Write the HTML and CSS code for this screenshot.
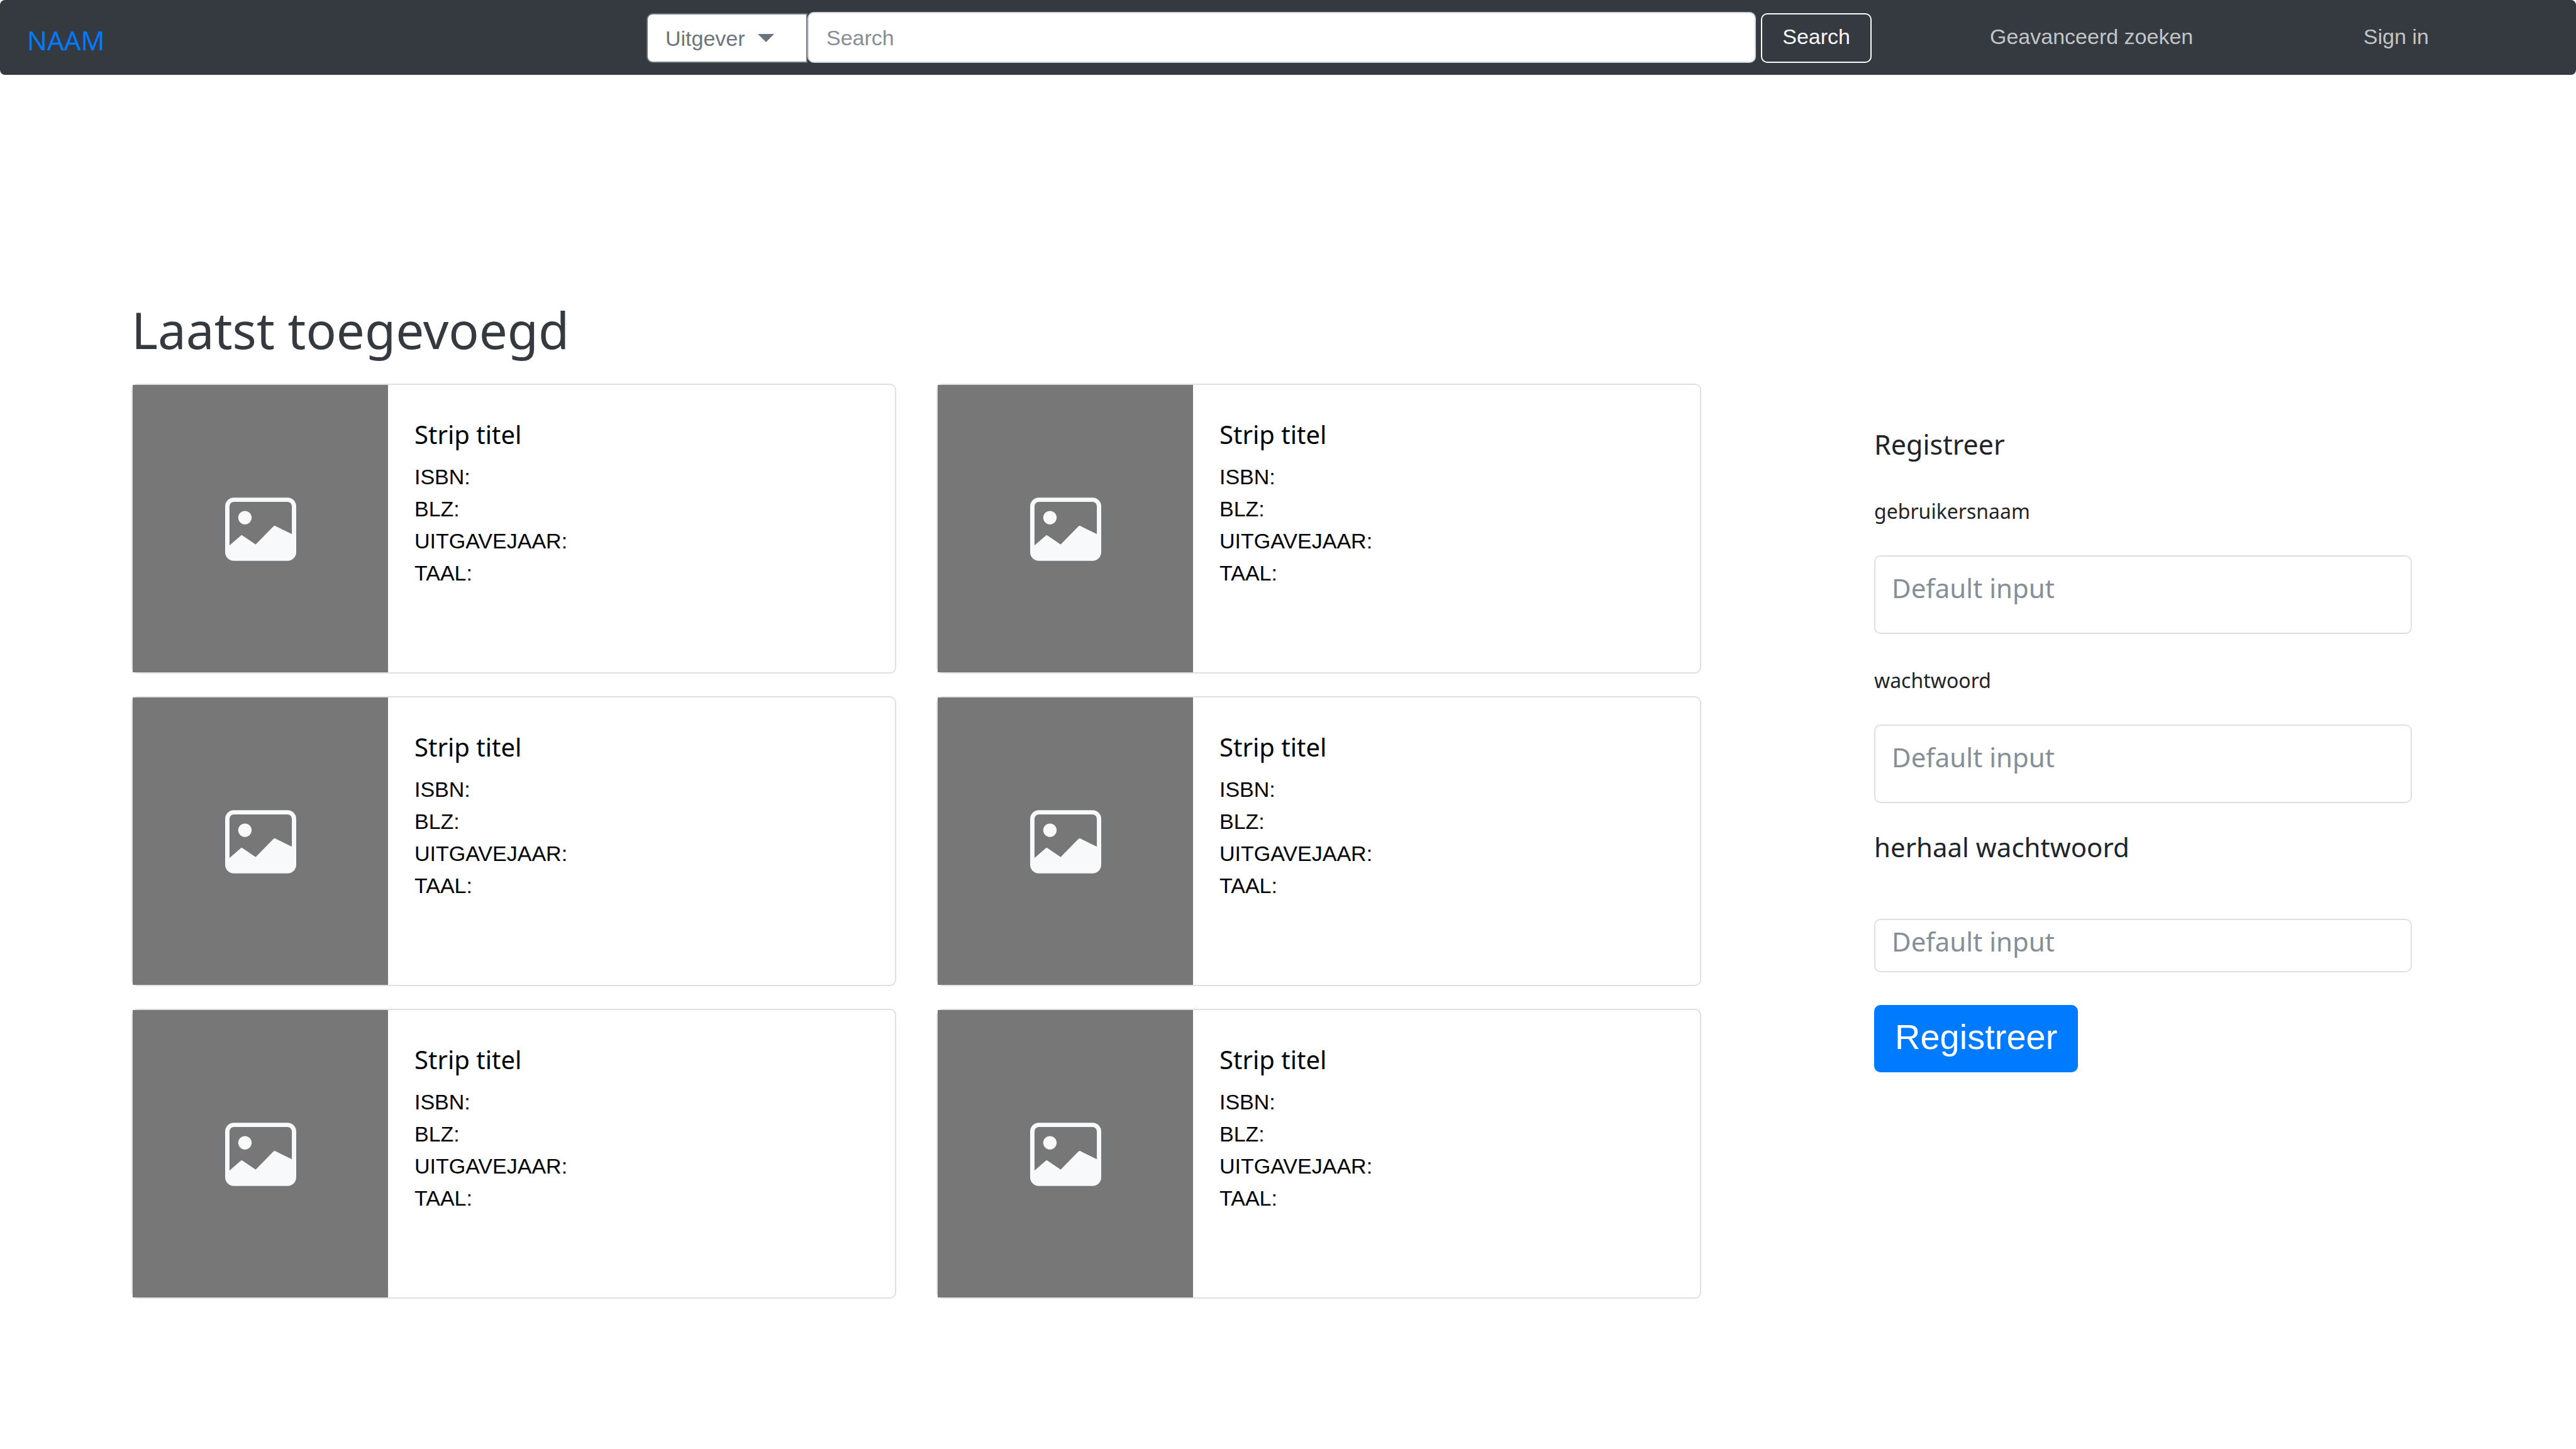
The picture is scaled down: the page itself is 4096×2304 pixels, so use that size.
FILE: index.html
```html
<!DOCTYPE html>
<html lang="nl">
<head>
  <meta charset="utf-8">
  <meta name="viewport" content="width=device-width, initial-scale=1">
  <title>Laatst toegevoegd</title>
  <link rel="stylesheet" href="styles.css">
</head>
<body>
  <svg class="sprite" aria-hidden="true">
    <symbol id="picture" viewBox="0 0 212 189">
      <path fill-rule="evenodd" d="M26 0H186A26 26 0 0 1 212 26V163A26 26 0 0 1 186 189H26A26 26 0 0 1 0 163V26A26 26 0 0 1 26 0ZM26 13A13 13 0 0 0 13 26V143L46 114Q49 111 53 114L91 140L144 86Q148 82 152 86L199 109V26A13 13 0 0 0 186 13Z"/>
      <circle cx="59" cy="60" r="20"/>
    </symbol>
  </svg>

  <header class="navbar">
    <a class="brand" href="#">NAAM</a>
    <form class="search" role="search">
      <div class="picker">
        <select class="picker-select" aria-label="Zoeken op">
          <option>Uitgever</option>
          <option>Titel</option>
          <option>ISBN</option>
        </select>
        <svg class="picker-caret" viewBox="0 0 26 13" aria-hidden="true"><path d="M0 0H26L13 13Z"/></svg>
      </div>
      <input class="search-input" type="search" placeholder="Search" aria-label="Search">
      <button class="search-button" type="submit">Search</button>
    </form>
    <nav class="links">
      <a href="#">Geavanceerd zoeken</a>
      <a href="#">Sign in</a>
    </nav>
  </header>

  <main class="page">
    <section class="latest">
      <h1 class="latest-title">Laatst toegevoegd</h1>
      <div class="cards">
        <article class="card">
          <div class="cover"><svg class="cover-icon" aria-hidden="true"><use href="#picture"/></svg></div>
          <div class="card-body">
            <h2 class="card-title">Strip titel</h2>
            <ul class="facts"><li>ISBN:</li><li>BLZ:</li><li>UITGAVEJAAR:</li><li>TAAL:</li></ul>
          </div>
        </article>
        <article class="card">
          <div class="cover"><svg class="cover-icon" aria-hidden="true"><use href="#picture"/></svg></div>
          <div class="card-body">
            <h2 class="card-title">Strip titel</h2>
            <ul class="facts"><li>ISBN:</li><li>BLZ:</li><li>UITGAVEJAAR:</li><li>TAAL:</li></ul>
          </div>
        </article>
        <article class="card">
          <div class="cover"><svg class="cover-icon" aria-hidden="true"><use href="#picture"/></svg></div>
          <div class="card-body">
            <h2 class="card-title">Strip titel</h2>
            <ul class="facts"><li>ISBN:</li><li>BLZ:</li><li>UITGAVEJAAR:</li><li>TAAL:</li></ul>
          </div>
        </article>
        <article class="card">
          <div class="cover"><svg class="cover-icon" aria-hidden="true"><use href="#picture"/></svg></div>
          <div class="card-body">
            <h2 class="card-title">Strip titel</h2>
            <ul class="facts"><li>ISBN:</li><li>BLZ:</li><li>UITGAVEJAAR:</li><li>TAAL:</li></ul>
          </div>
        </article>
        <article class="card">
          <div class="cover"><svg class="cover-icon" aria-hidden="true"><use href="#picture"/></svg></div>
          <div class="card-body">
            <h2 class="card-title">Strip titel</h2>
            <ul class="facts"><li>ISBN:</li><li>BLZ:</li><li>UITGAVEJAAR:</li><li>TAAL:</li></ul>
          </div>
        </article>
        <article class="card">
          <div class="cover"><svg class="cover-icon" aria-hidden="true"><use href="#picture"/></svg></div>
          <div class="card-body">
            <h2 class="card-title">Strip titel</h2>
            <ul class="facts"><li>ISBN:</li><li>BLZ:</li><li>UITGAVEJAAR:</li><li>TAAL:</li></ul>
          </div>
        </article>
      </div>
    </section>

    <form class="register">
      <h2 class="register-title">Registreer</h2>
      <div class="field">
        <label for="username">gebruikersnaam</label>
        <input id="username" type="text" placeholder="Default input">
      </div>
      <div class="field">
        <label for="password">wachtwoord</label>
        <input id="password" type="password" placeholder="Default input">
      </div>
      <div class="field field-repeat">
        <label for="repeat">herhaal wachtwoord</label>
        <input id="repeat" type="password" placeholder="Default input">
      </div>
      <button class="register-button" type="submit">Registreer</button>
    </form>
  </main>
</body>
</html>
```

FILE: styles.css
```css
:root {
  --sans: "Liberation Sans", Arial, sans-serif;
  --ui: "Noto Sans", "Segoe UI", sans-serif;
  --line: #e0e0e0;
  --blue: #007bff;
  --dark: #343a40;
  --muted: #868e96;
}

* {
  box-sizing: border-box;
}

body {
  margin: 0;
  background: #fff;
  color: #212529;
  font-family: var(--ui);
}

h1,
h2,
ul {
  margin: 0;
  padding: 0;
  font-weight: 400;
}

a {
  text-decoration: none;
}

input,
select,
button {
  margin: 0;
  border-radius: 10px;
}

input::placeholder {
  color: var(--muted);
  opacity: 1;
}

.sprite {
  display: none;
}

/* Navigation bar */

.navbar {
  display: grid;
  grid-template-columns: 985fr 1948fr 886fr;
  align-items: center;
  padding: 19px 234px 19px 43px;
  border-radius: 8px;
  background: var(--dark);
  font-family: var(--sans);
  font-size: 34px;
}

.brand {
  padding-top: 8px;
  color: var(--blue);
  font-family: var(--ui);
  font-size: 42px;
  line-height: 60px;
}

.search {
  display: flex;
  align-items: flex-end;
}

.picker {
  display: grid;
  grid-template-columns: 256px;
  align-items: center;
}

.picker-select,
.picker-caret {
  grid-area: 1 / 1;
}

.picker-select {
  height: 79px;
  padding: 0 28px;
  appearance: none;
  border: 2px solid #6c757d;
  border-radius: 10px 0 0 10px;
  background: #fff;
  color: #6c757d;
  font: 34px var(--sans);
}

.picker-caret {
  width: 26px;
  height: 13px;
  margin-right: 53px;
  justify-self: end;
  fill: #6c757d;
  pointer-events: none;
}

.search-input {
  flex: 1;
  min-width: 0;
  height: 81px;
  padding: 2px 28px 0;
  appearance: none;
  border: 2px solid #ced4da;
  background: #fff;
  font: 34px var(--sans);
}

.search-button {
  height: 79px;
  margin-left: 8px;
  padding: 0 32px 4px;
  border: 2px solid #f8f9fa;
  background: transparent;
  color: #f8f9fa;
  font: 34px var(--sans);
}

.links {
  display: flex;
  justify-content: space-between;
  padding: 0 0 2px 188px;
}

.links a {
  color: #c2c4c6;
}

/* Page columns */

.page {
  display: grid;
  grid-template-columns: 2496fr 855fr;
  column-gap: 275px;
  align-items: start;
  padding: 357px 261px 239px 209px;
}

/* Latest comics */

.latest-title {
  margin-bottom: 38px;
  color: var(--dark);
  font-size: 80px;
  line-height: 96px;
}

.cards {
  display: grid;
  grid-template-columns: 1fr 1fr;
  gap: 36px 64px;
}

.card {
  display: flex;
  min-height: 461px;
  border: 2px solid var(--line);
  border-radius: 10px;
  color: #000;
}

.cover {
  display: flex;
  flex: none;
  align-items: center;
  justify-content: center;
  width: 406px;
  padding-top: 2px;
  background: #777;
}

.cover-icon {
  width: 113px;
  height: 101px;
  fill: #f8f9fa;
}

.card-body {
  padding: 53px 42px;
}

.card-title {
  margin-bottom: 16px;
  font-size: 40px;
  line-height: 52px;
}

.facts {
  list-style: none;
  font-family: var(--sans);
  font-size: 34px;
  line-height: 51px;
}

/* Registration form */

.register {
  display: flex;
  flex-direction: column;
  padding-top: 201px;
}

.register-title {
  margin-bottom: 54px;
  font-size: 43px;
  line-height: 60px;
}

.field {
  display: flex;
  flex-direction: column;
  gap: 48px;
  margin-bottom: 52px;
}

.field label {
  font-size: 32px;
  line-height: 44px;
}

.field input {
  height: 125px;
  padding: 0 26px 22px;
  border: 2px solid var(--line);
  background: #fff;
  font: 42px var(--ui);
}

.field-repeat {
  gap: 84px;
  margin-top: -12px;
}

.field-repeat label {
  font-size: 42px;
  line-height: 60px;
}

.field-repeat input {
  height: 85px;
  padding-bottom: 14px;
}

.register-button {
  align-self: flex-start;
  height: 107px;
  padding: 0 33px 6px;
  border: 0;
  background: var(--blue);
  color: #fff;
  font: 56px var(--sans);
}
```
